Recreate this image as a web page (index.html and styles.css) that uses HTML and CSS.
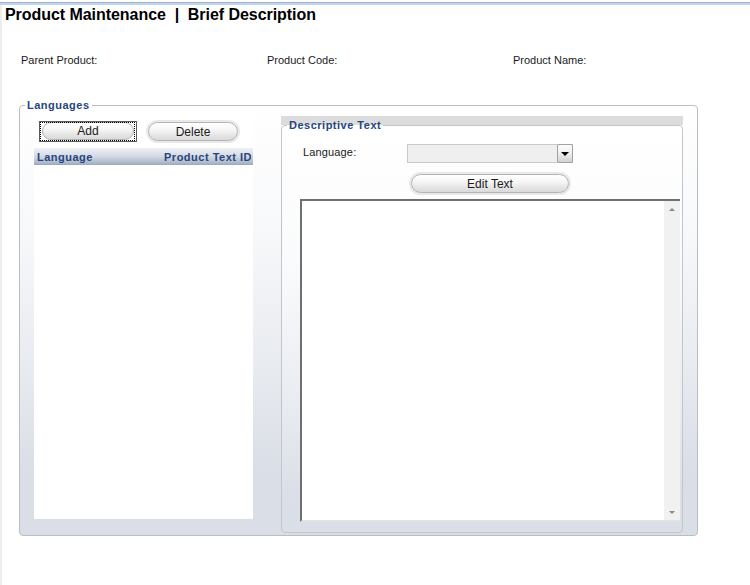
FILE: index.html
```html
<!DOCTYPE html>
<html>
<head>
<meta charset="utf-8">
<title>Product Maintenance | Brief Description</title>
<link rel="stylesheet" href="styles.css">
</head>
<body>
<div class="topbar"></div>
<div class="page">
  <h1 class="title">Product Maintenance &nbsp;|&nbsp; Brief Description</h1>
  <div class="fields">
    <span class="field">Parent Product:</span>
    <span class="field">Product Code:</span>
    <span class="field">Product Name:</span>
  </div>
  <fieldset class="languages">
    <legend class="legend lang-legend">Languages</legend>
    <div class="lang-body">
      <div class="list-panel">
        <div class="btn-row">
          <div class="btn-default"><div class="pill">Add</div></div>
          <div class="pill halo delete">Delete</div>
        </div>
        <div class="grid-head">
          <span>Language</span>
          <span>Product Text ID</span>
        </div>
        <div class="grid-body"></div>
      </div>
      <div class="desc-panel">
        <fieldset class="desc">
          <legend class="legend desc-legend">Descriptive Text</legend>
          <div class="desc-inner">
            <div class="lang-row">
              <span class="lang-label">Language:</span>
              <div class="select">
                <div class="select-btn"><span class="tri-down"></span></div>
              </div>
            </div>
            <div class="edit-row">
              <div class="pill halo edit">Edit Text</div>
            </div>
            <div class="textarea">
              <div class="text-space"></div>
              <div class="scrollbar">
                <span class="arrow-up"></span>
                <span class="arrow-down"></span>
              </div>
            </div>
          </div>
        </fieldset>
      </div>
    </div>
  </fieldset>
</div>
</body>
</html>
```
FILE: styles.css
```css
* { box-sizing: border-box; }
html, body { margin: 0; padding: 0; background: #fff; }
body {
  width: 750px;
  height: 585px;
  overflow: hidden;
  font-family: "Liberation Sans", Arial, sans-serif;
  color: #1c1c1c;
}
.topbar {
  margin-top: 2px;
  height: 3px;
  border-top: 1px solid #a9b1bf;
  background: #bcd6f5;
}
.page {
  border-left: 2px solid #ededed;
  height: 580px;
  padding-left: 3px;
}
.title {
  margin: 0;
  font-size: 16px;
  line-height: 19px;
  font-weight: bold;
  color: #000;
  letter-spacing: -0.05px;
}
.fields {
  display: flex;
  margin-top: 30px;
  padding-left: 16px;
  font-size: 11px;
  line-height: 13px;
  color: #1a1a1a;
}
.field { width: 246px; flex-shrink: 0; }

.legend {
  padding: 0 2px;
  margin-left: 5px;
  font-size: 11px;
  line-height: 13px;
  font-weight: bold;
  letter-spacing: 0.5px;
  color: #26457f;
}
.languages {
  margin: 32px 0 0 14px;
  padding: 0;
  width: 679px;
  border: 1px solid #b9bdc5;
  border-radius: 4px;
  background: linear-gradient(to bottom, #ffffff 0%, #f7f8fa 30%, #e7eaef 62%, #dadee6 85%, #dadee6 100%);
}
.lang-body {
  display: flex;
  gap: 28px;
  padding: 4px 14px 2px 14px;
}
.list-panel {
  width: 219px;
  margin-bottom: 14px;
  background: #fff;
  display: flex;
  flex-direction: column;
}
.btn-row {
  display: flex;
  align-items: flex-start;
  padding: 5px 0 0 5px;
}
.pill {
  display: flex;
  align-items: center;
  justify-content: center;
  height: 18px;
  border: 1px solid #b3b3b3;
  border-radius: 10px;
  background: linear-gradient(to bottom, #ffffff 0%, #f6f6f6 40%, #e4e4e4 75%, #dadada 100%);
  font-size: 12px;
  color: #1a1a1a;
}
.halo { box-shadow: 0 0 0 2px #e9e9e9; }
.btn-default {
  position: relative;
  width: 98px;
  height: 21px;
  border: 1px solid #5a5a5a;
  padding: 0 2px 1px 2px;
}
.btn-default::after {
  content: "";
  position: absolute;
  inset: 0 1px 0 0;
  border: 1px dotted #000;
}
.delete {
  width: 90px;
  height: 19px;
  margin: 1px 0 0 11px;
}
.grid-head {
  margin-top: 6px;
  height: 17px;
  display: flex;
  justify-content: space-between;
  align-items: center;
  padding: 0 1px 0 3px;
  background: linear-gradient(to bottom, #eef1f5 0%, #d3d9e3 50%, #a9b5c8 90%, #9aa7bc 100%);
  font-size: 11px;
  font-weight: bold;
  letter-spacing: 0.5px;
  color: #26457f;
}
.grid-body { flex: 1; background: #fff; }

.desc-panel {
  width: 402px;
  padding-top: 3px;
  background: linear-gradient(to bottom, #dcdcdc 0px, #dcdcdc 9px, #ffffff 9px, #fafbfc 35%, #e8ebf0 70%, #dadee6 92%, #dadee6 100%);
}
.desc {
  margin: 0;
  padding: 0;
  border: 1px solid #c3c5ca;
  border-radius: 4px;
}
.desc-inner {
  padding: 12px 1px 10px 18px;
}
.lang-row {
  display: flex;
  align-items: center;
  padding-left: 3px;
  height: 19px;
}
.lang-label {
  width: 104px;
  padding-bottom: 3px;
  font-size: 11px;
  letter-spacing: 0.15px;
  color: #1a1a1a;
}
.select {
  width: 166px;
  height: 19px;
  display: flex;
  justify-content: flex-end;
  background: #efefef;
  border: 1px solid #c9c9c9;
}
.select-btn {
  width: 16px;
  height: 19px;
  margin: -1px -1px 0 0;
  display: flex;
  align-items: center;
  justify-content: center;
  border: 1px solid #a2a2a2;
  border-radius: 2px;
  background: linear-gradient(to bottom, #fdfdfd 0%, #eeeeee 50%, #d2d2d2 100%);
}
.tri-down {
  width: 0;
  height: 0;
  border-left: 4px solid transparent;
  border-right: 4px solid transparent;
  border-top: 4px solid #000;
}
.edit-row {
  margin-top: 11px;
  padding-left: 111px;
}
.edit {
  width: 158px;
  height: 19px;
}
.textarea {
  margin-top: 6px;
  width: 380px;
  height: 323px;
  display: flex;
  border-top: 2px solid #6f6f6f;
  border-left: 2px solid #6f6f6f;
  border-bottom: 2px solid #e2e2e2;
  background: #fff;
}
.text-space { flex: 1; }
.scrollbar {
  width: 16px;
  background: #f1f1f1;
  display: flex;
  flex-direction: column;
  justify-content: space-between;
  align-items: center;
  padding: 7px 0 6px;
}
.arrow-up {
  width: 0;
  height: 0;
  border-left: 3px solid transparent;
  border-right: 3px solid transparent;
  border-bottom: 3px solid #8a8a8a;
}
.arrow-down {
  width: 0;
  height: 0;
  border-left: 3px solid transparent;
  border-right: 3px solid transparent;
  border-top: 3px solid #8a8a8a;
}
```
